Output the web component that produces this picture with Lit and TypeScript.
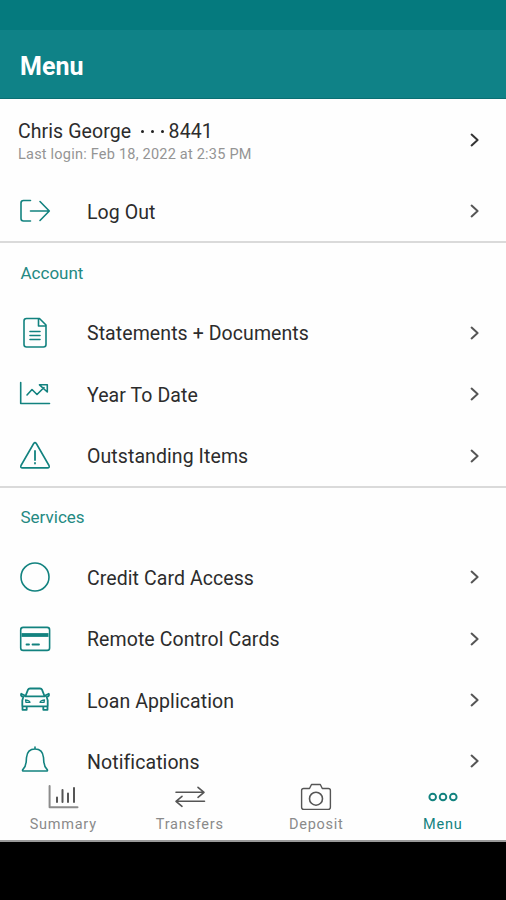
import { LitElement, html, css, svg } from "lit";
import { customElement, property } from "lit/decorators.js";

// Every glyph is drawn around the origin of a 36x36 box.
const glyphs: Record<string, unknown> = {
  logout: svg`<path d="M-4.5 -10.5H-11.5Q-14 -10.5 -14 -8V7.5Q-14 10 -11.5 10H-4.5M-4.5 0H14M5 -9.5L14.3 0L5 9.5"/>`,
  document: svg`<path d="M-8.5 -14.5H4.5L11 -8V11.5Q11 14 8.5 14H-8.5Q-11 14 -11 11.5V-12Q-11 -14.5 -8.5 -14.5ZM3.5 -14V-7H10.5M-5 -1.5H5M-5 2.5H5M-5 6.5H5"/>`,
  trend: svg`<path d="M-14.3 -11.5V9.5H14.5"/><path d="M-8 1L-3 -4.5L2 .5L9 -6.5M4.5 -9.2H12.3V-2Z"/>`,
  warning: svg`<path d="M-1.3 -12.5Q0 -14.2 1.3 -12.5L14 9.5Q14.9 11.9 12.5 11.9H-12.5Q-14.9 11.9 -14 9.5Z"/><path d="M0 -5V4M0 7V7.6" stroke-width="1.8"/>`,
  circle: svg`<circle r="14"/>`,
  card: svg`<rect x="-14.3" y="-11.6" width="28.9" height="23" rx="2.5"/><path d="M-13.5 -4H13.5" stroke-width="3.8" stroke-linecap="butt"/><path d="M-8.5 5.5H-6M-2.5 5.5H4" stroke-width="1.8"/>`,
  car: svg`<path d="M-9.5 -4L-7 -10.3Q-6.5 -11.5 -5 -11.5H5Q6.5 -11.5 7 -10.3L9.5 -4M-10 -3.7H10M-9.7 -4.2L-13.8 -6.2Q-14.8 -4 -11.7 -3.2L-12.7 .5V6.3H12.7V.5L11.7 -3.2Q14.8 -4 13.8 -6.2L9.7 -4.2M-12.5 6.3V9.8H-8.3V6.3M8.3 6.3V9.8H12.5V6.3" stroke-width="1.8"/><path d="M-9.5 -.2L-9 2.3H-5Q-5 .7 -9.5 -.2ZM9.5 -.2L9 2.3H5Q5 .7 9.5 -.2Z" stroke-width="1.3"/>`,
  bell: svg`<path d="M0 -14V-12.3M-12 8.3C-8 4.5 -9 .5 -8.5 -3.5C-8 -9 -4.7 -12 0 -12S8 -9 8.5 -3.5C9 .5 8 4.5 12 8.3Q13.2 10 11.3 10H-11.3Q-13.2 10 -12 8.3Z"/>`,
  chevron: svg`<path d="M-3.4 -5.4L2.6 0L-3.4 5.4" stroke-width="2"/>`,
  bars: svg`<path d="M-13.4 -11V10.2H14.5" stroke-width="2" stroke="#8c8c8c"/><path d="M-6 .5V5M-.5 -7V5M5 -3.5V5M11 -9V5" stroke-width="2"/>`,
  transfer: svg`<path d="M-14 -4.7H13.5M8 -9.7L14 -4.7L8 .3M14.5 4.3H-13.5M-8 -.7L-14 4.3L-8 9.3"/>`,
  camera: svg`<path d="M-12.3 -8.5H-6.5L-4.5 -12.5H4.3L6.3 -8.5H12.3Q14.4 -8.5 14.4 -6.5V10.3Q14.4 12.4 12.3 12.4H-12.3Q-14.4 12.4 -14.4 10.3V-6.5Q-14.4 -8.5 -12.3 -8.5Z" stroke-width="1.4"/><circle cx="0" cy="1.7" r="6.5"/>`,
  more: svg`<g stroke-width="1.9"><circle cx="-10.3" cy="0" r="3.3"/><circle r="3.3"/><circle cx="10.3" cy="0" r="3.3"/></g>`,
};

@customElement("app-icon")
class AppIcon extends LitElement {
  @property() name = "";
  static styles = css`
    :host { display: block; width: 36px; height: 36px; flex: none; }
    svg { display: block; fill: none; stroke: currentColor; stroke-width: 1.6; stroke-linejoin: round; stroke-linecap: round; }
  `;
  render() {
    return html`<svg width="36" height="36" viewBox="-18 -18 36 36">${glyphs[this.name]}</svg>`;
  }
}

@customElement("menu-row")
class MenuRow extends LitElement {
  @property() icon = "";
  @property() label = "";
  static styles = css`
    :host { display: flex; align-items: center; height: 61.4px; padding: 0 13px 0 17px; box-sizing: border-box; }
    .icon { color: #12827f; }
    .label { flex: 1; margin-left: 34px; padding-top: 2px; font-size: 19.5px; letter-spacing: 0.08px; color: #2c2c2c; white-space: nowrap; }
    .go { color: #555; }
  `;
  render() {
    return html`<app-icon class="icon" name=${this.icon}></app-icon>
      <span class="label">${this.label}</span>
      <app-icon class="go" name="chevron"></app-icon>`;
  }
}

@customElement("app-root")
class AppRoot extends LitElement {
  static styles = css`
    :host { display: flex; flex-direction: column; height: 900px; background: #fefefe; font-family: Roboto, sans-serif; overflow: hidden; }
    .status { height: 30px; background: #057a7e; flex: none; }
    header { height: 69px; flex: none; box-sizing: border-box; background: #0f8287; border-bottom: 1px solid #0a6f73; color: #fff; display: flex; align-items: center; padding: 4px 20px 0; font-size: 25px; font-weight: 700; }
    .user { height: 82px; flex: none; box-sizing: border-box; display: flex; align-items: center; padding: 0 13px 0 18px; }
    .who { flex: 1; padding-top: 5px; }
    .name { display: flex; font-size: 19.5px; line-height: 24px; letter-spacing: 0.08px; color: #2c2c2c; }
    .dots { display: flex; gap: 6.5px; align-items: center; margin: 0 4.5px 0 9.5px; }
    .dots i { width: 3.5px; height: 3.5px; border-radius: 50%; background: #222; }
    .login { font-size: 14.5px; line-height: 22px; letter-spacing: 0.22px; color: #949494; }
    .go { color: #333; }
    .logout { height: 60px; }
    hr { height: 2px; margin: 0; border: 0; background: #dadada; flex: none; }
    h2 { margin: 0; height: 59.3px; padding: 0 20.5px; display: flex; align-items: center; box-sizing: border-box; font-size: 17px; font-weight: 400; letter-spacing: 0; color: #248982; }
    .services { height: 58.1px; padding-bottom: 1px; }
    main { height: 680px; flex: none; }
    nav { flex: none; height: 63px; box-sizing: border-box; display: grid; grid-template-columns: repeat(4, 1fr); border-bottom: 2px solid #9a9a9a; }
    .tab { display: flex; flex-direction: column; align-items: center; color: #555; }
    .tab span { margin-top: 1px; font-size: 14.5px; line-height: 18px; letter-spacing: 0.75px; color: #8a8a8a; }
    .tab.on, .tab.on span { color: #12827f; }
    .system { flex: 1; background: #000; }
  `;
  render() {
    const account = [["document", "Statements + Documents"], ["trend", "Year To Date"], ["warning", "Outstanding Items"]];
    const services = [["circle", "Credit Card Access"], ["card", "Remote Control Cards"], ["car", "Loan Application"], ["bell", "Notifications"]];
    const tabs = [["bars", "Summary"], ["transfer", "Transfers"], ["camera", "Deposit"], ["more", "Menu"]];
    const row = ([icon, label]: string[]) => html`<menu-row icon=${icon} label=${label}></menu-row>`;
    return html`
      <div class="status"></div>
      <header>Menu</header>
      <main>
        <div class="user">
          <div class="who">
            <div class="name"><span>Chris George</span><span class="dots"><i></i><i></i><i></i></span><span>8441</span></div>
            <div class="login">Last login: Feb 18, 2022 at 2:35 PM</div>
          </div>
          <app-icon class="go" name="chevron"></app-icon>
        </div>
        <menu-row class="logout" icon="logout" label="Log Out"></menu-row>
        <hr />
        <h2>Account</h2>
        ${account.map(row)}
        <hr />
        <h2 class="services">Services</h2>
        ${services.map(row)}
      </main>
      <nav>
        ${tabs.map(([icon, label]) => html`<div class="tab ${icon === "more" ? "on" : ""}"><app-icon name=${icon}></app-icon><span>${label}</span></div>`)}
      </nav>
      <div class="system"></div>
    `;
  }
}
